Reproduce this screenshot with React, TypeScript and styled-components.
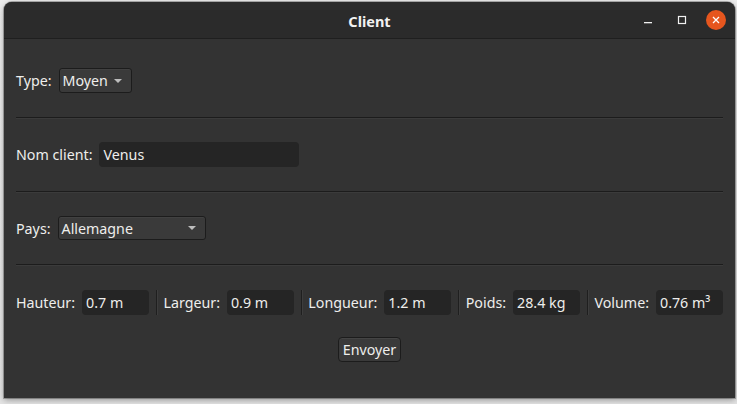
import React from "react";
import styled, { createGlobalStyle } from "styled-components";

const GlobalStyle = createGlobalStyle`
  html, body { margin: 0; padding: 0; }
  body {
    background: #e9e9e9;
    font-family: "Noto Sans", "DejaVu Sans", sans-serif;
    font-size: 14.25px;
    color: #eeeeec;
  }
  * { box-sizing: border-box; }
`;

const Desktop = styled.div`
  width: 737px;
  height: 404px;
  overflow: hidden;
  padding: 2px 2px 0 4px;
  background: linear-gradient(#ececec, #e4e4e4);
`;

const Window = styled.div`
  width: 731px;
  height: 396px;
  background: #333333;
  border-radius: 8px 8px 0 0;
  box-shadow: 0 2px 6px rgba(0, 0, 0, 0.35), 0 0 0 1px rgba(0, 0, 0, 0.25);
  display: flex;
  flex-direction: column;
  overflow: hidden;
`;

const TitleBar = styled.div`
  height: 37px;
  flex: none;
  background: #2b2b2b;
  border-bottom: 1px solid #1f1f1f;
  display: grid;
  grid-template-columns: 1fr auto 1fr;
  align-items: center;
`;

const Title = styled.div`
  grid-column: 2;
  font-weight: 700;
  font-size: 14.5px;
  color: #f2f2f2;
  padding-top: 1px;
`;

const Controls = styled.div`
  grid-column: 3;
  justify-self: end;
  display: flex;
  align-items: center;
  gap: 14px;
  padding-right: 9px;
`;

const CtrlButton = styled.div<{ $close?: boolean }>`
  width: 20px;
  height: 20px;
  border-radius: 50%;
  display: flex;
  align-items: center;
  justify-content: center;
  background: ${(p) => (p.$close ? "#e6561e" : "transparent")};
`;

const Content = styled.div`
  flex: 1;
  display: flex;
  flex-direction: column;
  gap: 24px;
  padding: 29px 12px 0 12px;
`;

const Row = styled.div<{ $h?: number }>`
  height: ${(p) => p.$h ?? 25}px;
  display: flex;
  align-items: center;
`;

const Label = styled.span`
  white-space: nowrap;
  margin-right: 7px;
  color: #eeeeec;
`;

const Separator = styled.div`
  height: 1px;
  flex: none;
  background: #1c1c1c;
  box-shadow: 0 1px 0 #3b3b3b;
`;

const Combo = styled.div<{ $w: number }>`
  width: ${(p) => p.$w}px;
  height: 100%;
  border: 1px solid #1c1c1c;
  border-radius: 3px;
  background: #3a3a3a;
  box-shadow: inset 0 1px 0 rgba(255, 255, 255, 0.04);
  display: flex;
  align-items: center;
  justify-content: space-between;
  padding: 0 9px 0 3px;
  color: #eeeeec;
`;

const Arrow = styled.span`
  width: 0;
  height: 0;
  border-left: 4px solid transparent;
  border-right: 4px solid transparent;
  border-top: 4px solid #bdbdbd;
`;

const Entry = styled.div<{ $w: number }>`
  width: ${(p) => p.$w}px;
  flex: none;
  height: 25px;
  background: #252525;
  border-radius: 4px;
  display: flex;
  align-items: center;
  padding: 0 4px;
  color: #eeeeec;
  white-space: nowrap;
`;

const MeasureRow = styled.div`
  height: 25px;
  display: flex;
  align-items: center;
  margin-top: 1px;
`;

const Field = styled.div`
  display: flex;
  align-items: center;
  flex: none;
`;

const VSep = styled.div`
  width: 1px;
  align-self: stretch;
  background: #1f1f1f;
  box-shadow: 1px 0 0 #3d3d3d;
  margin: 0 7px;
`;

const ButtonRow = styled.div`
  display: flex;
  justify-content: center;
  margin-top: -2px;
`;

const Button = styled.button`
  height: 25px;
  width: 63px;
  font: inherit;
  color: #eeeeec;
  background: #3a3a3a;
  border: 1px solid #1c1c1c;
  border-radius: 4px;
  padding: 0;
  box-shadow: inset 0 1px 0 rgba(255, 255, 255, 0.05);
`;

const measures = [
  { label: "Hauteur:", value: "0.7 m" },
  { label: "Largeur:", value: "0.9 m" },
  { label: "Longueur:", value: "1.2 m" },
  { label: "Poids:", value: "28.4 kg" },
  { label: "Volume:", value: "0.76 m³" },
];

export default function App() {
  return (
    <>
      <GlobalStyle />
      <Desktop>
        <Window>
          <TitleBar>
            <Title>Client</Title>
            <Controls>
              <CtrlButton>
                <svg width="10" height="10" viewBox="0 0 10 10">
                  <rect x="1" y="7" width="8" height="1.3" fill="#f0f0f0" />
                </svg>
              </CtrlButton>
              <CtrlButton>
                <svg width="10" height="10" viewBox="0 0 10 10">
                  <rect x="1.5" y="1.5" width="7" height="7" fill="none" stroke="#f0f0f0" strokeWidth="1.2" />
                </svg>
              </CtrlButton>
              <CtrlButton $close>
                <svg width="8" height="8" viewBox="0 0 8 8">
                  <path d="M1 1 L7 7 M7 1 L1 7" stroke="#ffffff" strokeWidth="1.3" />
                </svg>
              </CtrlButton>
            </Controls>
          </TitleBar>
          <Content>
            <Row>
              <Label>Type:</Label>
              <Combo $w={73}>
                Moyen
                <Arrow />
              </Combo>
            </Row>
            <Separator />
            <Row>
              <Label>Nom client:</Label>
              <Entry $w={200}>Venus</Entry>
            </Row>
            <Separator />
            <Row $h={24}>
              <Label>Pays:</Label>
              <Combo $w={148}>
                Allemagne
                <Arrow />
              </Combo>
            </Row>
            <Separator />
            <MeasureRow>
              {measures.map((m, i) => (
                <React.Fragment key={m.label}>
                  {i > 0 && <VSep />}
                  <Field>
                    <Label>{m.label}</Label>
                    <Entry $w={67}>{m.value}</Entry>
                  </Field>
                </React.Fragment>
              ))}
            </MeasureRow>
            <ButtonRow>
              <Button>Envoyer</Button>
            </ButtonRow>
          </Content>
        </Window>
      </Desktop>
    </>
  );
}
